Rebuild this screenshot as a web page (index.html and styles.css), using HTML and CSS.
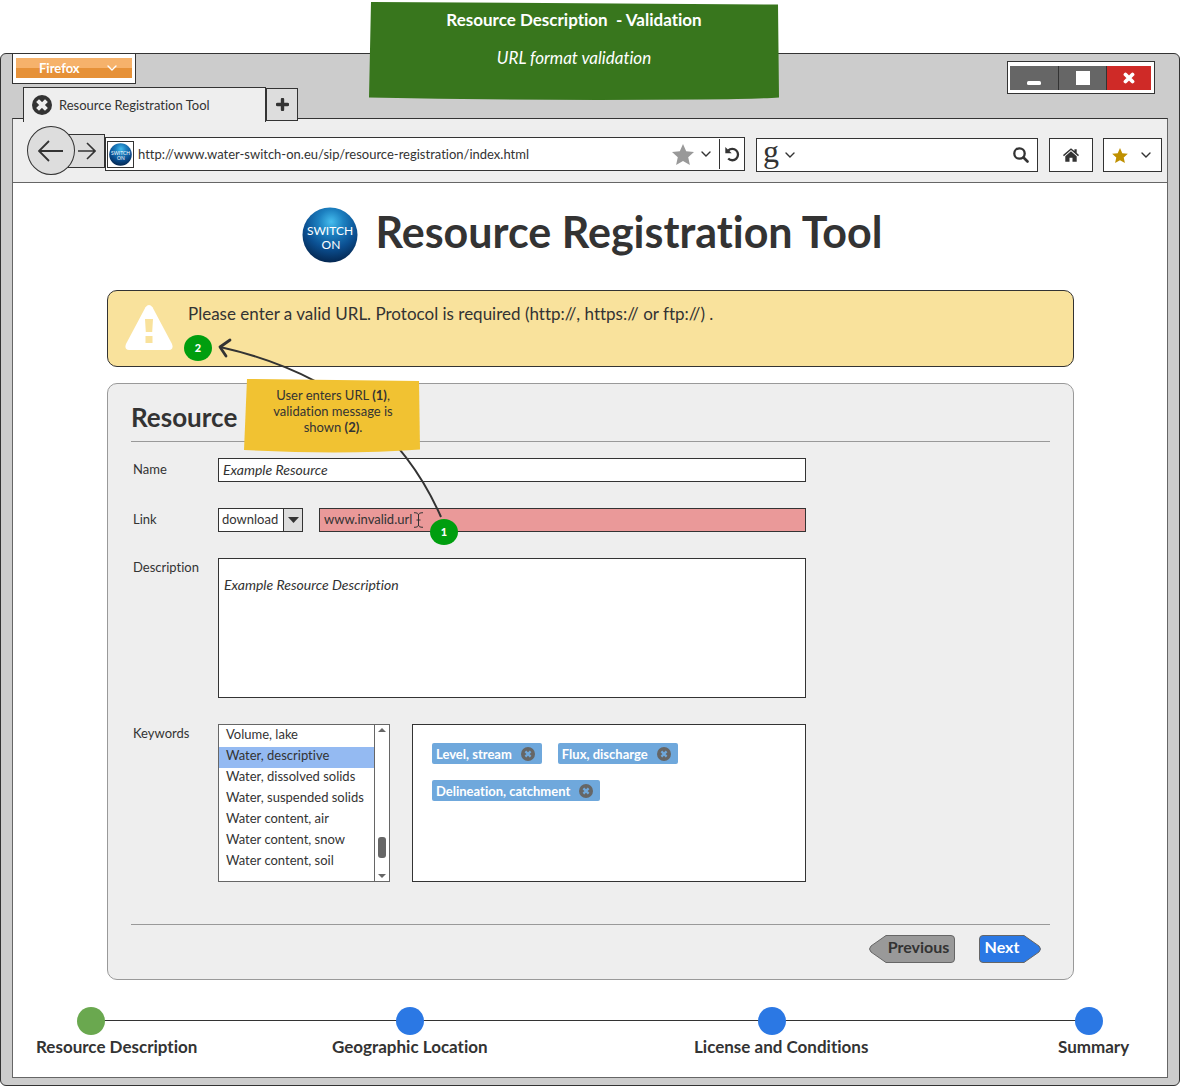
FILE: index.html
```html
<!DOCTYPE html>
<html lang="en">
<head>
<meta charset="utf-8">
<meta name="viewport" content="width=device-width, initial-scale=1">
<title>Resource Registration Tool</title>
<link rel="stylesheet" href="styles.css">
</head>
<body>
<svg class="defs" aria-hidden="true">
  <defs>
    <radialGradient id="ball" cx="0.52" cy="0.26" r="0.75">
      <stop offset="0" stop-color="#45bdee"/>
      <stop offset="0.3" stop-color="#1c80c0"/>
      <stop offset="0.65" stop-color="#0b4f91"/>
      <stop offset="1" stop-color="#04264f"/>
    </radialGradient>
    <symbol id="chevron" viewBox="0 0 10 6"><path d="M1 1l4 4 4-4" fill="none" stroke="currentColor" stroke-width="1.4" stroke-linecap="round"/></symbol>
    <symbol id="star" viewBox="0 0 22 21"><path d="M11 0l3.2 7.2 7.8.8-5.8 5.2 1.7 7.8L11 17l-6.900 4 1.700-7.800L0 8l7.800-.8z" fill="currentColor"/></symbol>
    <symbol id="remove" viewBox="0 0 14 14"><circle cx="7" cy="7" r="7" fill="#666"/><path d="M4.400 4.400l5.200 5.200M9.600 4.400L4.400 9.600" stroke="#6fa8dc" stroke-width="2.200"/></symbol>
    <symbol id="logo" viewBox="0 0 56 56">
      <circle cx="28" cy="28" r="27.500" fill="url(#ball)"/>
      <text x="28" y="28" text-anchor="middle" class="logo-text">SWITCH</text>
      <text x="29" y="42" text-anchor="middle" class="logo-text">ON</text>
    </symbol>
  </defs>
</svg>

<aside class="banner">
  <svg class="paper" viewBox="0 0 410 98" preserveAspectRatio="none" aria-hidden="true"><path d="M2 0L409 2.500 410 95.500Q390 97 330 97.500Q160 99 0 95.500z" fill="#38761d"/></svg>
  <p class="banner-title">Resource Description&nbsp; - Validation</p>
  <p class="banner-sub">URL format validation</p>
</aside>

<div class="window">
  <header class="titlebar">
    <div class="titlebar-left">
      <div class="menu-frame">
        <button class="firefox" type="button">Firefox <svg width="10" height="6"><use href="#chevron"/></svg></button>
      </div>
      <div class="tabs">
        <div class="tab">
          <button class="plain" type="button" aria-label="Close tab"><svg width="20" height="20" viewBox="0 0 20 20"><circle cx="10" cy="10" r="10" fill="#333"/><path d="M7 7l6 6M13 7l-6 6" stroke="#eee" stroke-width="4" stroke-linecap="square"/></svg></button>
          <span>Resource Registration Tool</span>
        </div>
        <button class="new-tab" type="button" aria-label="New tab"><svg width="13" height="13" viewBox="0 0 13 13"><path d="M6.500 1.500v10M1.500 6.500h10" stroke="#333" stroke-width="3.400" stroke-linecap="round"/></svg></button>
      </div>
    </div>
    <div class="controls">
      <button type="button" aria-label="Minimize"><svg width="14" height="14" viewBox="0 0 14 14"><rect y="10" width="14" height="4" rx="1.500" fill="#fff"/></svg></button>
      <button type="button" aria-label="Maximize"><svg width="14" height="14" viewBox="0 0 14 14"><rect width="14" height="14" fill="#fff"/></svg></button>
      <button class="close" type="button" aria-label="Close"><svg width="12" height="12" viewBox="0 0 12 12"><path d="M2.500 2.500l7 7M9.500 2.500l-7 7" stroke="#fff" stroke-width="3.800" stroke-linecap="round"/></svg></button>
    </div>
  </header>

  <div class="viewport">
    <nav class="toolbar" aria-label="Browser">
      <div class="history">
        <button class="back" type="button" aria-label="Back"><svg width="26" height="22" viewBox="0 0 26 22"><path d="M25 11H2M11 1L1 11l10 10" fill="none" stroke="#333" stroke-width="1.800"/></svg></button>
        <button class="forward" type="button" aria-label="Forward"><svg width="18" height="18" viewBox="0 0 18 18"><path d="M0 9h16M9 1l8 8-8 8" fill="none" stroke="#333" stroke-width="1.600"/></svg></button>
      </div>
      <div class="field address">
        <span class="favicon"><svg width="23" height="23"><use href="#logo"/></svg></span>
        <input type="text" aria-label="Address" value="http://www.water-switch-on.eu/sip/resource-registration/index.html">
        <svg class="grey" width="22" height="21"><use href="#star"/></svg>
        <svg width="10" height="6"><use href="#chevron"/></svg>
        <button class="reload" type="button" aria-label="Reload"><svg width="15" height="15" viewBox="0 0 15 15"><path d="M3.200 3.600A5.700 5.700 0 1 1 3.200 11.500" fill="none" stroke="#333" stroke-width="2.300"/><path d="M.3 0v6.200h6.400z" fill="#333"/></svg></button>
      </div>
      <div class="field search">
        <span class="google">g</span>
        <svg width="10" height="6"><use href="#chevron"/></svg>
        <input type="text" aria-label="Search">
        <svg width="16" height="16" viewBox="0 0 16 16"><circle cx="6.500" cy="6.500" r="5.200" fill="none" stroke="#333" stroke-width="2.300"/><path d="M10.500 10.500l4 4" stroke="#333" stroke-width="2.600" stroke-linecap="round"/></svg>
      </div>
      <button class="field home" type="button" aria-label="Home"><svg width="16" height="14" viewBox="0 0 14 12"><path d="M7 0l3 2.600V1h2v3.300l2 1.800-.8.900L7 1.600.8 7 0 6.100z" fill="#333"/><path d="M7 2.800l5 4.300V12H8.300V8.300H5.700V12H2V7.100z" fill="#333"/></svg></button>
      <button class="field bookmarks" type="button" aria-label="Bookmarks"><svg class="gold" width="16" height="15"><use href="#star"/></svg><svg width="10" height="6"><use href="#chevron"/></svg></button>
    </nav>

    <main class="page">
      <header class="brand">
        <svg width="56" height="56" role="img" aria-label="Switch-On"><use href="#logo"/></svg>
        <h1>Resource Registration Tool</h1>
      </header>

      <div class="alert" role="alert">
        <svg width="48" height="45" viewBox="0 0 48 45"><path d="M20.500 2.200Q24-2 27.500 2.200L47 39Q49 44.500 44 45H4Q-1 44.500 1 39z" fill="#fff"/><path d="M20 14h8l-.8 13h-6.400zM20.500 31h7v7h-7z" fill="#f9e29c"/></svg>
        <p>Please enter a valid URL. Protocol is required (http://, https:// or ftp://) .</p>
      </div>

      <form class="panel">
        <h2>Resource</h2>
        <div class="fields">
          <label for="name">Name</label>
          <input class="box italic" id="name" type="text" value="Example Resource">

          <label for="link">Link</label>
          <div class="link-row">
            <div class="dropdown">
              <select id="kind" aria-label="Link type"><option>download</option></select>
              <span class="dropdown-arrow"><svg width="11" height="6" viewBox="0 0 11 6"><path d="M0 0h11L5.500 6z" fill="#333"/></svg></span>
            </div>
            <input class="box invalid" id="link" type="text" value="www.invalid.url" aria-invalid="true">
          </div>

          <label for="description">Description</label>
          <textarea class="box italic" id="description">Example Resource Description</textarea>

          <label for="keywords">Keywords</label>
          <div class="keywords-row">
            <div class="listbox">
              <select id="keywords" size="7">
                <option>Volume, lake</option>
                <option selected>Water, descriptive</option>
                <option>Water, dissolved solids</option>
                <option>Water, suspended solids</option>
                <option>Water content, air</option>
                <option>Water content, snow</option>
                <option>Water content, soil</option>
              </select>
              <div class="scrollbar">
                <svg width="8" height="4" viewBox="0 0 8 4"><path d="M0 4l4-4 4 4z" fill="#666"/></svg>
                <span class="thumb"></span>
                <svg width="8" height="4" viewBox="0 0 8 4"><path d="M0 0l4 4 4-4z" fill="#666"/></svg>
              </div>
            </div>
            <div class="tags">
              <span class="tag">Level, stream <button class="plain" type="button" aria-label="Remove Level, stream"><svg width="14" height="14"><use href="#remove"/></svg></button></span>
              <span class="tag">Flux, discharge <button class="plain" type="button" aria-label="Remove Flux, discharge"><svg width="14" height="14"><use href="#remove"/></svg></button></span>
              <span class="tag">Delineation, catchment <button class="plain" type="button" aria-label="Remove Delineation, catchment"><svg width="14" height="14"><use href="#remove"/></svg></button></span>
            </div>
          </div>
        </div>
        <div class="actions">
          <button class="step-button previous" type="button"><svg class="paper" viewBox="0 0 86 28" aria-hidden="true"><path d="M17 .5H82Q85.500.5 85.500 4V24Q85.500 27.500 82 27.500H17L2 17Q-1 14 2 11z" fill="#999" stroke="#666"/></svg><span>Previous</span></button>
          <button class="step-button next" type="button"><svg class="paper" viewBox="0 0 62 28" aria-hidden="true"><path d="M45 .5H4Q.5.5.5 4V24Q.5 27.500 4 27.500H45L60 17Q63 14 60 11z" fill="#2b78e4" stroke="#666"/></svg><span>Next</span></button>
        </div>
      </form>

      <ol class="steps">
        <li class="step first"><span class="dot done"></span>Resource Description</li>
        <li class="step"><span class="dot"></span>Geographic Location</li>
        <li class="step"><span class="dot"></span>License and Conditions</li>
        <li class="step last"><span class="dot"></span>Summary</li>
      </ol>

      <svg class="arrow" width="240" height="190" viewBox="0 0 240 190" aria-hidden="true"><path d="M8 12Q170 48 229 182" fill="none" stroke="#333" stroke-width="2"/><path d="M18 5L8 12l6 9" fill="none" stroke="#333" stroke-width="2.800" stroke-linecap="round" stroke-linejoin="round"/></svg>
      <svg class="ibeam" width="9" height="16" viewBox="0 0 9 16" aria-hidden="true"><path d="M0 .7Q4.500.7 4.500 3V13Q4.500 15.300 0 15.300M9 .7Q4.500.7 4.500 3M4.500 13Q4.500 15.300 9 15.300M2.500 8h4" fill="none" stroke="#333"/></svg>
      <aside class="note">
        <svg class="paper" viewBox="0 0 176 74" preserveAspectRatio="none" aria-hidden="true"><path d="M3 0L175 2 176 70.500Q100 76 0 71z" fill="#f1c232"/></svg>
        <p>User enters URL <b>(1)</b>,<br>validation message is<br>shown <b>(2)</b>.</p>
      </aside>
      <span class="badge badge-one">1</span>
      <span class="badge badge-two">2</span>
    </main>
  </div>
</div>
</body>
</html>
```
FILE: styles.css
```css
* { box-sizing: border-box; }

body {
  margin: 0;
  padding-top: 53px;
  position: relative;
  background: #fff;
  color: #333;
  font-family: Lato, "Liberation Sans", sans-serif;
  font-size: 13px;
  font-variant-ligatures: none;
  line-height: 16px;
}

p, h1, h2, ol { margin: 0; padding: 0; }
svg { display: block; flex: none; }
button, input, select, textarea { font: inherit; font-variant-ligatures: none; color: inherit; margin: 0; }
button { padding: 0; border: 0; background: none; }
.defs { position: absolute; width: 0; height: 0; }
.plain { display: flex; }
.paper { position: absolute; inset: 0; width: 100%; height: 100%; }
.logo-text { font-family: Lato, sans-serif; font-size: 12px; fill: #fff; }

/* Caption over the window */
.banner {
  position: absolute;
  z-index: 3;
  top: 2px;
  left: 50%;
  width: 410px;
  height: 98px;
  margin-left: -221px;
  padding-top: 8px;
  color: #fff;
  font-size: 17px;
  line-height: 20px;
  text-align: center;
}
.banner p { position: relative; }
.banner-title { font-weight: 700; }
.banner-sub { margin-top: 18px; font-style: italic; }

/* Browser window */
.window {
  padding: 0 11px 7px;
  border: 1px solid #333;
  border-radius: 6px;
  background: #ccc;
}
.titlebar { display: flex; justify-content: space-between; }
.menu-frame {
  width: 124px;
  padding: 4px 3px 5px;
  border: 1px solid #333;
  border-top: 0;
  background: #fff;
}
.firefox {
  display: flex;
  align-items: center;
  justify-content: space-between;
  width: 100%;
  height: 20px;
  padding: 0 15px 0 23px;
  background: linear-gradient(#f6b26b 50%, #e69138 50%);
  color: #fff;
  font-weight: 700;
}
.tabs { display: flex; margin: 3px 0 -4px 11px; position: relative; z-index: 1; }
.tab {
  display: flex;
  align-items: center;
  gap: 7px;
  width: 243px;
  height: 35px;
  padding-left: 8px;
  border: 1px solid #333;
  border-bottom: 0;
  background: #eee;
}
.new-tab {
  display: grid;
  place-items: center;
  width: 32px;
  height: 33px;
  margin-top: 1px;
  border: 1px solid #333;
  background: #ddd;
}
.controls {
  display: grid;
  grid-template-columns: 49px 48px 44px;
  width: 148px;
  height: 33px;
  margin: 7px 13px 0 0;
  padding: 4px 3px 3px 2px;
  border: 1px solid #333;
  background: #fff;
}
.controls button { display: grid; place-items: center; background: #666; border-right: 1px solid #333; }
.controls .close { background: #cf2a27; border: 0; }

.viewport { border: 1px solid #666; border-top-color: #333; background: #fff; }
.toolbar {
  display: flex;
  align-items: flex-start;
  height: 64px;
  padding: 7px 5px 0 14px;
  border-bottom: 1px solid #666;
  background: #eee;
}
.history { display: flex; align-items: center; }
.back, .forward { display: grid; place-items: center; border: 1px solid #333; background: #ddd; }
.back { position: relative; z-index: 1; width: 48px; height: 49px; border-radius: 50%; }
.forward { width: 37px; height: 34px; margin-left: -7px; }
.field {
  display: flex;
  align-items: center;
  height: 34px;
  margin-top: 12px;
  border: 1px solid #333;
  background: #fff;
}
.field input { flex: 1; min-width: 0; padding: 0; border: 0; outline: 0; background: none; }
.address { flex: 1; min-width: 0; margin-top: 11px; padding-left: 1px; }
.favicon { padding: 1px; border: 1px solid #333; }
.address input { padding-left: 4px; }
.grey { color: #999; margin-right: 7px; }
.reload { display: grid; place-items: center; width: 25px; height: 30px; margin-left: 8px; border-left: 1px solid #333; }
.search { flex: 0 1 282px; min-width: 0; margin-left: 11px; padding: 0 8px 0 6px; gap: 6px; }
.google { font: 32px/20px "Liberation Serif", serif; padding-bottom: 8px; }
.home { justify-content: center; width: 44px; margin-left: 11px; }
.bookmarks { justify-content: space-between; width: 59px; margin-left: 10px; padding: 0 10px 0 8px; }
.gold { color: #bf9000; }

/* Page */
.page { position: relative; padding: 23px 93px 20px 94px; }
.brand { display: flex; align-items: center; justify-content: center; gap: 18px; height: 58px; padding-left: 3px; }
h1 { font-size: 43px; line-height: 48px; padding-bottom: 6px; }
.alert {
  display: flex;
  gap: 15px;
  height: 77px;
  margin-top: 26px;
  padding: 14px 17px;
  border: 1px solid #333;
  border-radius: 10px;
  background: #f9e29c;
  font-size: 17px;
  line-height: 18px;
}
.panel {
  margin-top: 16px;
  padding: 19px 23px 16px;
  border: 1px solid #999;
  border-radius: 10px;
  background: #eee;
}
h2 { padding-bottom: 10px; border-bottom: 1px solid #999; font-size: 26px; line-height: 28px; }
.fields {
  display: grid;
  grid-template-columns: 85px minmax(0, 588px);
  row-gap: 26px;
  margin-top: 16px;
  padding: 0 2px;
}
.fields > label { padding-top: 3px; }
.fields > label[for="description"], .fields > label[for="keywords"] { padding-top: 1px; }
.box { width: 100%; height: 24px; padding: 0 4px 2px; border: 1px solid #333; border-radius: 0; outline: 0; background: #fff; }
.italic { font-size: 14px; font-style: italic; }
textarea.box { display: block; height: 140px; padding: 18px 5px; resize: none; }
.link-row { display: flex; gap: 16px; }
.dropdown { position: relative; flex: none; width: 85px; }
.dropdown select { width: 100%; height: 24px; padding: 0 3px 2px; border: 1px solid #333; border-radius: 0; background: #fff; appearance: none; }
.dropdown-arrow { position: absolute; inset: 1px 1px 1px auto; display: grid; place-items: center; width: 19px; border-left: 1px solid #333; background: #ddd; pointer-events: none; }
.box.invalid { background: #ea9999; }
.keywords-row { display: flex; gap: 22px; height: 158px; }
.listbox { display: flex; flex: none; width: 172px; border: 1px solid #666; background: #fff; }
.listbox select { flex: 1; min-width: 0; height: 147px; margin-top: 1px; padding: 0; border: 0; outline: 0; background: none; overflow: hidden; }
.listbox option { min-height: 21px; padding: 0 7px; line-height: 21px; color: #333; }
.listbox option:checked { background: linear-gradient(#94baf2, #94baf2); }
.scrollbar { display: flex; flex-direction: column; align-items: center; width: 15px; padding: 3px 0; border-left: 1px solid #666; }
.thumb { width: 8px; height: 21px; margin: auto 0 16px; border-radius: 3px; background: #666; }
.tags { display: flex; flex: 1; flex-wrap: wrap; align-content: flex-start; gap: 16px; padding: 18px 19px; border: 1px solid #333; background: #fff; }
.tag { display: flex; align-items: center; gap: 9px; height: 21px; padding: 0 7px 0 4px; border-radius: 2px; background: #6fa8dc; color: #fff; font-weight: 700; }
.actions { display: flex; justify-content: flex-end; gap: 24px; margin-top: 42px; padding: 10px 9px 0 0; border-top: 1px solid #999; }
.step-button { position: relative; height: 28px; font-size: 16px; font-weight: 700; line-height: 24px; }
.step-button span { position: relative; display: block; padding-bottom: 4px; }
.previous { width: 86px; padding-left: 13px; }
.next { width: 62px; padding-right: 16px; color: #fff; }

/* Progress */
.steps {
  position: relative;
  display: grid;
  grid-template-columns: 296fr 362fr 364fr 70fr;
  margin: 27px -54px 0 -71px;
  list-style: none;
  font-size: 17px;
  font-weight: 700;
  line-height: 20px;
  white-space: nowrap;
}
.step { min-width: 0; }
.steps::before { content: ""; position: absolute; top: 13px; left: 55px; right: 39px; border-top: 1px solid #333; }
.dot { position: relative; display: block; width: 28px; height: 28px; margin: 0 0 2px 64px; border-radius: 50%; background: #2b78e4; }
.first .dot { margin-left: 41px; }
.last .dot { margin-left: 17px; }
.done { background: #6aa84f; }

/* Annotations over the page */
.arrow { position: absolute; top: 152px; left: 199px; }
.ibeam { position: absolute; top: 329px; left: 401px; }
.note { position: absolute; top: 196px; left: 231px; width: 176px; height: 74px; padding-top: 8px; text-align: center; }
.note p { position: relative; padding-left: 2px; }
.badge { position: absolute; display: grid; place-items: center; width: 28px; height: 26px; border-radius: 50%; background: #009e0f; color: #fff; font-size: 11px; font-weight: 900; }
.badge-one { top: 336px; left: 417px; }
.badge-two { top: 152px; left: 171px; }
```
